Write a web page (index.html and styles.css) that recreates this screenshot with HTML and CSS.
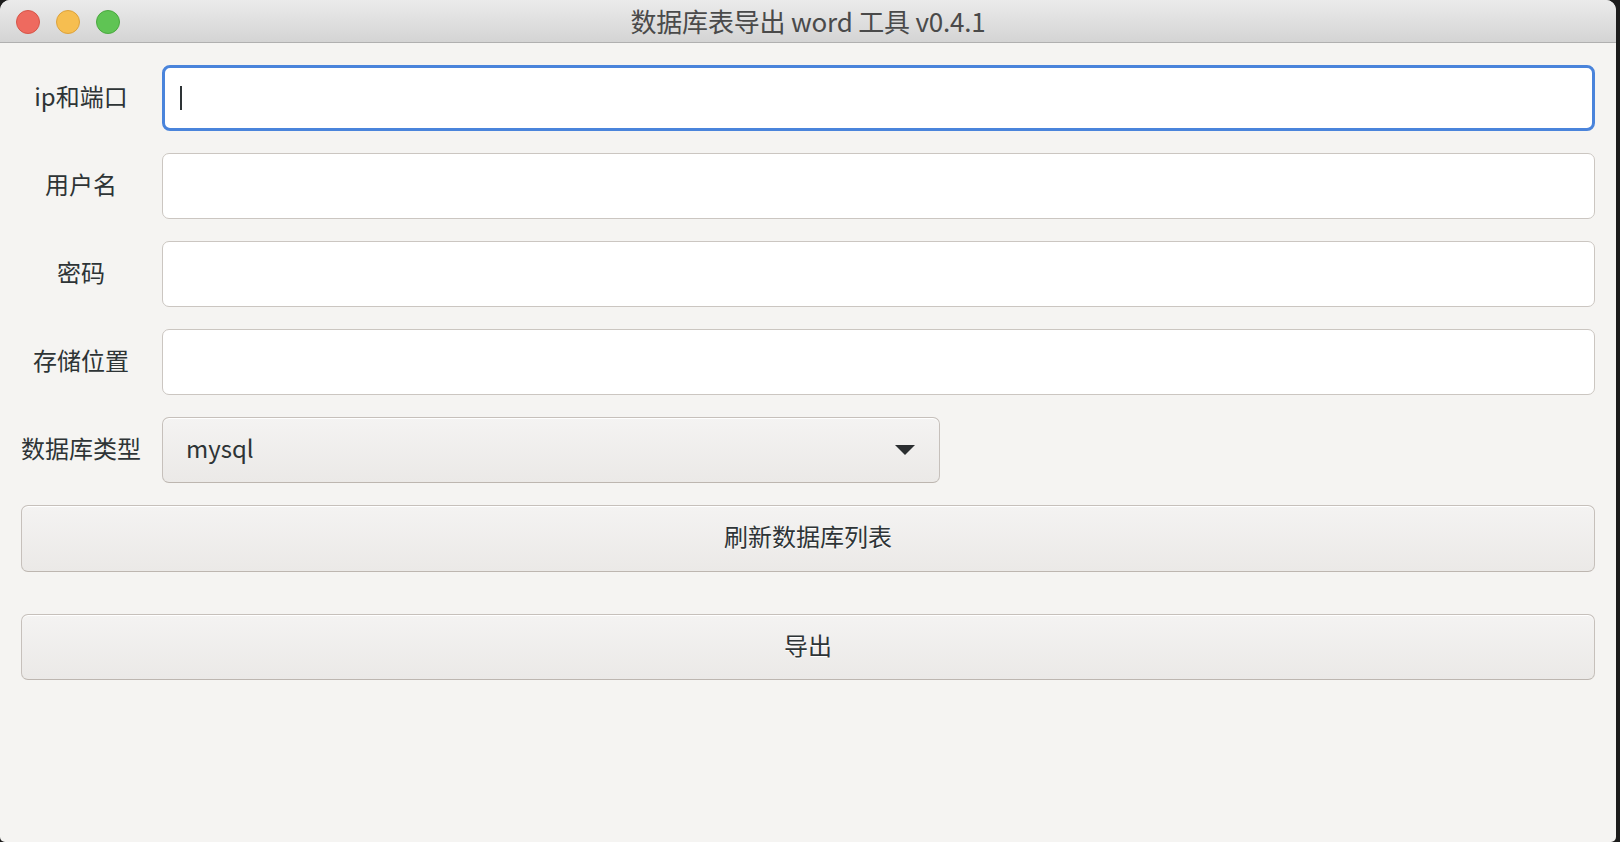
FILE: index.html
```html
<!DOCTYPE html>
<html lang="zh">
<head>
<meta charset="utf-8">
<title>数据库表导出word工具</title>
<link rel="stylesheet" href="styles.css">
</head>
<body>
<div class="window">
  <div class="titlebar">
    <div class="lights">
      <span class="light red"></span>
      <span class="light yellow"></span>
      <span class="light green"></span>
    </div>
    <div class="title">数据库表导出 word 工具 v0.4.1</div>
  </div>
  <div class="content">
    <div class="form">
      <label class="label">ip和端口</label>
      <div class="input focused"><span class="caret"></span></div>
      <label class="label">用户名</label>
      <div class="input"></div>
      <label class="label">密码</label>
      <div class="input"></div>
      <label class="label">存储位置</label>
      <div class="input"></div>
      <label class="label">数据库类型</label>
      <div class="combo">
        <span class="combo-text">mysql</span>
        <svg class="arrow" width="20" height="10" viewBox="0 0 20 10"><path d="M0 0 L20 0 L10 10 Z" fill="#2b2e30"/></svg>
      </div>
    </div>
    <div class="button">刷新数据库列表</div>
    <div class="button export">导出</div>
  </div>
</div>
</body>
</html>
```

FILE: styles.css
```css
html, body {
  margin: 0;
  padding: 0;
  background: #1c1c1c;
  height: 842px;
  overflow: hidden;
}

body {
  font-family: "Noto Sans CJK SC", "Noto Sans", sans-serif;
  color: #2e3436;
}

.window {
  width: 1616px;
  height: 842px;
  background: #f5f4f2;
  border-radius: 10px 10px 5px 5px;
  overflow: hidden;
  display: flex;
  flex-direction: column;
}

.titlebar {
  height: 42px;
  flex: none;
  background: linear-gradient(#ebebeb, #d4d4d4);
  border-bottom: 1px solid #b0b0b0;
  display: flex;
  align-items: center;
  justify-content: center;
  position: relative;
}

.lights {
  position: absolute;
  left: 16px;
  top: 10px;
  display: flex;
  gap: 16px;
}

.light {
  width: 24px;
  height: 24px;
  border-radius: 50%;
  box-sizing: border-box;
}

.light.red { background: #ee6a5f; border: 1px solid #d65548; }
.light.yellow { background: #f6be50; border: 1px solid #dca23c; }
.light.green { background: #5fc454; border: 1px solid #4aa83f; }

.title {
  font-size: 26px;
  color: #4a4a4a;
  letter-spacing: -0.2px;
  line-height: 42px;
}

.content {
  padding: 22px 21px 0 21px;
  display: flex;
  flex-direction: column;
  gap: 22px;
}

.form {
  display: grid;
  grid-template-columns: max-content 1fr;
  column-gap: 21px;
  row-gap: 22px;
  align-items: center;
}

.label {
  font-size: 24px;
  text-align: center;
  color: #2e3436;
  padding-bottom: 6px;
}

.input {
  height: 66px;
  box-sizing: border-box;
  background: #ffffff;
  border: 1.5px solid #cbc6c1;
  border-radius: 7px;
  display: flex;
  align-items: center;
  padding-left: 17px;
}

.input.focused {
  border: 3px solid #4a84db;
  border-radius: 8px;
  padding-left: 15px;
}

.caret {
  width: 2px;
  height: 24px;
  background: #2e3436;
}

.combo {
  width: 778px;
  height: 66px;
  box-sizing: border-box;
  border: 1.5px solid #c6c0bb;
  border-bottom-color: #bdb6b0;
  border-radius: 7px;
  background: linear-gradient(#f4f3f2, #ebe9e7);
  box-shadow: inset 0 1px 0 #ffffff;
  display: flex;
  align-items: center;
  justify-content: space-between;
  padding: 0 24px 0 23px;
}

.combo-text {
  font-size: 24px;
  color: #2e3436;
  padding-bottom: 6px;
}

.button {
  height: 67px;
  box-sizing: border-box;
  border: 1.5px solid #c6c0bb;
  border-bottom-color: #bdb6b0;
  border-radius: 7px;
  background: linear-gradient(#f4f3f2, #ebe9e7);
  box-shadow: inset 0 1px 0 #ffffff;
  display: flex;
  align-items: center;
  justify-content: center;
  font-size: 24px;
  color: #2e3436;
  text-shadow: 0 1px 0 #ffffff;
  padding-bottom: 6px;
}

.button.export {
  margin-top: 20px;
  height: 66px;
}
```
